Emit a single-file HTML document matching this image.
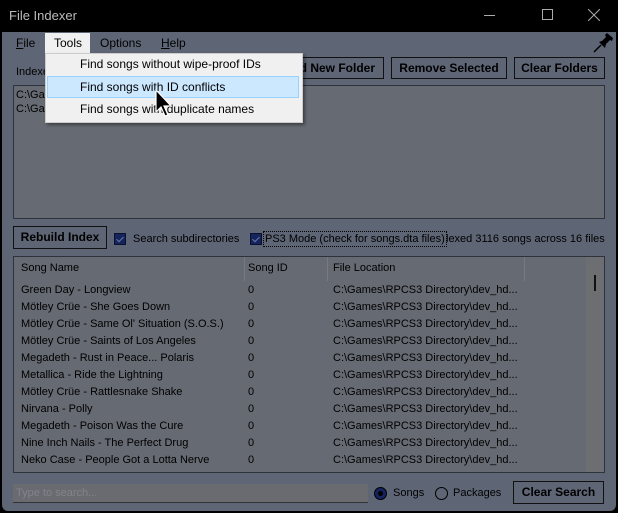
<!DOCTYPE html>
<html><head><meta charset="utf-8"><style>
*{margin:0;padding:0;box-sizing:border-box}
body{width:618px;height:513px;background:#000;font-family:"Liberation Sans",sans-serif;font-size:11px;color:#000;position:relative;overflow:hidden}
.a{position:absolute;white-space:nowrap}
.win{position:absolute;left:2px;top:32px;width:614px;height:479px;background:#5e6575;border-radius:0 0 6px 6px}
.btn{position:absolute;border:1px solid #111;background:#5e6575;font-weight:bold;font-size:12px;text-align:center;color:#000}
.box{position:absolute;background:#666a72;border:1px solid #2e323a}
.cb{position:absolute;width:12px;height:12px;background:#16245e;border:1px solid #0a1030}
.cb:after{content:"";position:absolute;left:3px;top:1px;width:3px;height:6px;border:solid #6a7aa8;border-width:0 1px 1px 0;transform:rotate(45deg)}
.row{position:absolute;left:21px;height:17px;line-height:17px}
</style></head><body>
<div class="a" style="left:9px;top:8px;color:#bbb;font-size:13px">File Indexer</div>
<div class="a" style="left:484px;top:15px;width:11px;height:1px;background:#aaa"></div>
<div class="a" style="left:542px;top:9px;width:11px;height:11px;border:1px solid #aaa"></div>
<svg class="a" style="left:588px;top:9px" width="12" height="12"><path d="M0 0L12 12M12 0L0 12" stroke="#aaa" stroke-width="1"/></svg>
<div class="win"></div>
<div class="a" style="left:16px;top:36px;font-size:12px"><u>F</u>ile</div>
<div class="a" style="left:45px;top:33px;width:45px;height:20px;background:#f0f0f0"></div>
<div class="a" style="left:54px;top:36px;font-size:12px">Tools</div>
<div class="a" style="left:100px;top:36px;font-size:12px">Options</div>
<div class="a" style="left:161px;top:36px;font-size:12px"><u>H</u>elp</div>
<svg class="a" style="left:592px;top:33px" width="22" height="20"><path d="M2 19L9 12" stroke="#000" stroke-width="1.5"/><path d="M7 9L13 15L14 11L18 7L20 8L21 5L15 0L13 2L14 4L10 8Z" fill="#000"/></svg>
<div class="a" style="left:16px;top:66px">Indexed folders:</div>
<div class="btn" style="left:270px;top:57px;width:114px;height:22px;line-height:20px;text-align:right;padding-right:8px">Add New Folder</div>
<div class="btn" style="left:391px;top:57px;width:116px;height:22px;line-height:20px">Remove Selected</div>
<div class="btn" style="left:514px;top:57px;width:91px;height:22px;line-height:20px">Clear Folders</div>
<div class="box" style="left:13px;top:85px;width:592px;height:134px"></div>
<div class="a" style="left:16px;top:88px;line-height:14px">C:\Games<br>C:\Games</div>
<div class="btn" style="left:13px;top:226px;width:94px;height:23px;line-height:21px">Rebuild Index</div>
<div class="cb" style="left:114px;top:233px"></div>
<div class="a" style="left:133px;top:233px">Search subdirectories</div>
<div class="cb" style="left:250px;top:233px"></div>
<div class="a" style="left:263px;top:231px;border:1px dotted #000;padding:1px 1px">PS3 Mode (check for songs.dta files)</div>
<div class="a" style="left:446px;top:233px">lexed 3116 songs across 16 files</div>
<div class="box" style="left:13px;top:256px;width:592px;height:217px;overflow:hidden">
<div class="a" style="left:230px;top:0;width:1px;height:24px;background:#777a80"></div>
<div class="a" style="left:313px;top:0;width:1px;height:24px;background:#777a80"></div>
<div class="a" style="left:510px;top:0;width:1px;height:24px;background:#777a80"></div>
<div class="a" style="left:572px;top:0;width:19px;height:216px;background:#6c6e72"></div>
<div class="a" style="left:580px;top:18px;width:2px;height:16px;background:#111"></div>
</div>
<div class="a" style="left:21px;top:262px">Song Name</div>
<div class="a" style="left:248px;top:262px">Song ID</div>
<div class="a" style="left:333px;top:262px">File Location</div>
<div style="position:absolute;left:0;top:282px;width:618px;height:190px;overflow:hidden">
<div class="row" style="top:0">Green Day - Longview</div>
<div class="row" style="top:17px">Mötley Crüe - She Goes Down</div>
<div class="row" style="top:34px">Mötley Crüe - Same Ol' Situation (S.O.S.)</div>
<div class="row" style="top:51px">Mötley Crüe - Saints of Los Angeles</div>
<div class="row" style="top:68px">Megadeth - Rust in Peace... Polaris</div>
<div class="row" style="top:85px">Metallica - Ride the Lightning</div>
<div class="row" style="top:102px">Mötley Crüe - Rattlesnake Shake</div>
<div class="row" style="top:119px">Nirvana - Polly</div>
<div class="row" style="top:136px">Megadeth - Poison Was the Cure</div>
<div class="row" style="top:153px">Nine Inch Nails - The Perfect Drug</div>
<div class="row" style="top:170px">Neko Case - People Got a Lotta Nerve</div>
<div class="row" style="top:187px">Neutral Milk Hotel - Song</div>
<div class="row" style="left:248px;top:0">0</div><div class="row" style="left:248px;top:17px">0</div><div class="row" style="left:248px;top:34px">0</div><div class="row" style="left:248px;top:51px">0</div><div class="row" style="left:248px;top:68px">0</div><div class="row" style="left:248px;top:85px">0</div><div class="row" style="left:248px;top:102px">0</div><div class="row" style="left:248px;top:119px">0</div><div class="row" style="left:248px;top:136px">0</div><div class="row" style="left:248px;top:153px">0</div><div class="row" style="left:248px;top:170px">0</div><div class="row" style="left:248px;top:187px">0</div>
<div class="row" style="left:333px;top:0">C:\Games\RPCS3 Directory\dev_hd...</div>
<div class="row" style="left:333px;top:17px">C:\Games\RPCS3 Directory\dev_hd...</div>
<div class="row" style="left:333px;top:34px">C:\Games\RPCS3 Directory\dev_hd...</div>
<div class="row" style="left:333px;top:51px">C:\Games\RPCS3 Directory\dev_hd...</div>
<div class="row" style="left:333px;top:68px">C:\Games\RPCS3 Directory\dev_hd...</div>
<div class="row" style="left:333px;top:85px">C:\Games\RPCS3 Directory\dev_hd...</div>
<div class="row" style="left:333px;top:102px">C:\Games\RPCS3 Directory\dev_hd...</div>
<div class="row" style="left:333px;top:119px">C:\Games\RPCS3 Directory\dev_hd...</div>
<div class="row" style="left:333px;top:136px">C:\Games\RPCS3 Directory\dev_hd...</div>
<div class="row" style="left:333px;top:153px">C:\Games\RPCS3 Directory\dev_hd...</div>
<div class="row" style="left:333px;top:170px">C:\Games\RPCS3 Directory\dev_hd...</div>
<div class="row" style="left:333px;top:187px">C:\Games\RPCS3 Directory\dev_hd...</div>
</div>
<div class="a" style="left:13px;top:484px;width:355px;height:19px;background:#696b70;border-bottom:1px solid #333"></div>
<div class="a" style="left:16px;top:487px;color:#80848c">Type to search...</div>
<div class="a" style="left:374px;top:487px;width:13px;height:13px;border-radius:50%;background:#16245e;border:1px solid #000"></div>
<div class="a" style="left:378px;top:491px;width:5px;height:5px;border-radius:50%;background:#000"></div>
<div class="a" style="left:393px;top:487px">Songs</div>
<div class="a" style="left:435px;top:487px;width:13px;height:13px;border-radius:50%;border:1px solid #000"></div>
<div class="a" style="left:453px;top:487px">Packages</div>
<div class="btn" style="left:513px;top:481px;width:91px;height:23px;line-height:21px">Clear Search</div>
<div class="a" style="left:45px;top:53px;width:258px;height:70px;background:#f0f0f0;border:1px solid #ccc;box-shadow:2px 2px 3px rgba(0,0,0,.4)"></div>
<div class="a" style="left:47px;top:76px;width:252px;height:22px;background:#cce8ff;border:1px solid #99d1ff"></div>
<div class="a" style="left:80px;top:57px;font-size:12px">Find songs without wipe-proof IDs</div>
<div class="a" style="left:80px;top:80px;font-size:12px">Find songs with ID conflicts</div>
<div class="a" style="left:80px;top:102px;font-size:12px">Find songs with duplicate names</div>
<svg class="a" style="left:155px;top:89px" width="20" height="30"><path d="M1 1L1 23L6 18L10 27L13 26L9 17L16 17Z" fill="#000" stroke="#fff" stroke-width="1.2"/></svg>
</body></html>
